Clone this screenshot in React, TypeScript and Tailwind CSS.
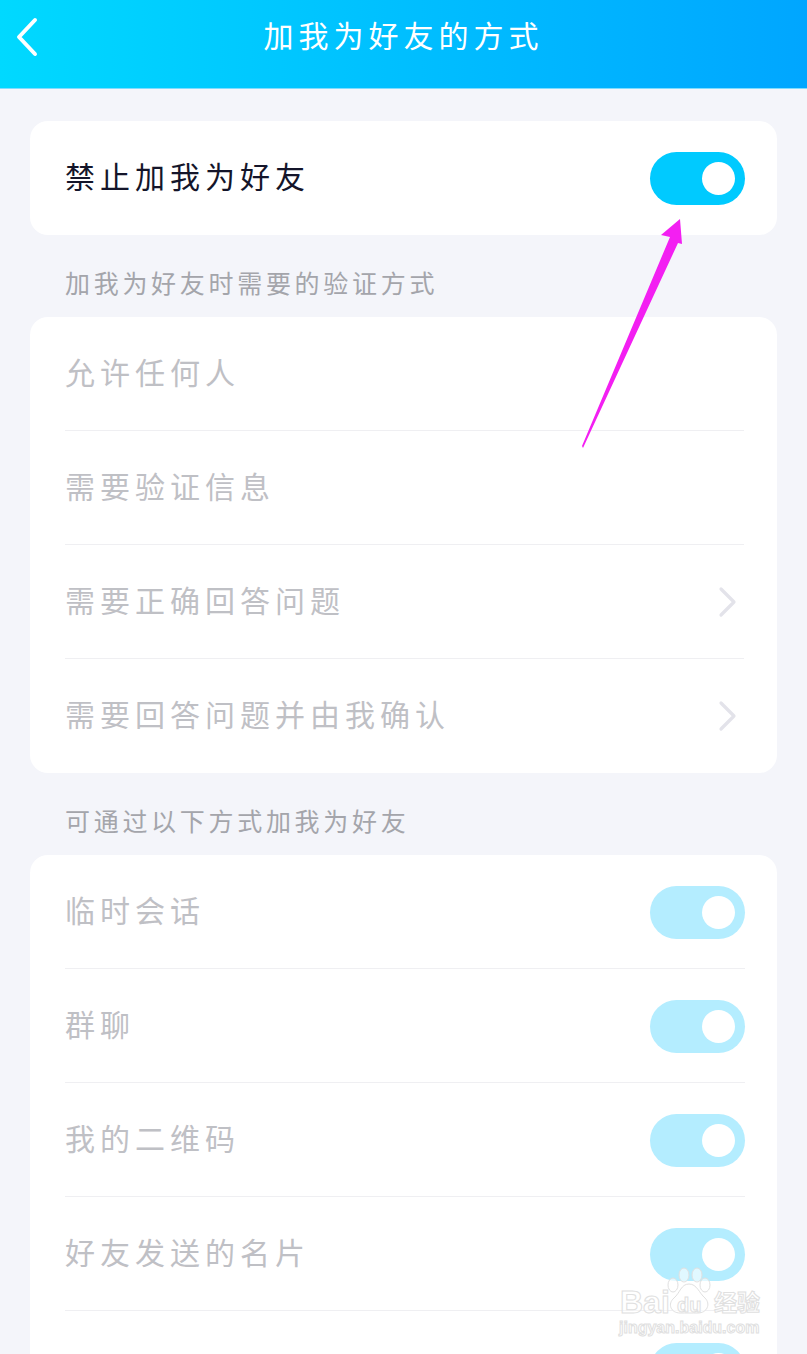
const fontCjk = 'font-["Noto_Sans_CJK_SC","Noto_Sans",sans-serif]'

function Toggle() {
  return (
    <div className="mt-[2px] flex h-[53px] w-[95px] flex-shrink-0 items-center justify-end rounded-full bg-[#b4edff] pr-[10px]">
      <div className="h-[33px] w-[33px] rounded-full bg-white" />
    </div>
  )
}

function Chevron() {
  return (
    <svg width="20" height="32" viewBox="0 0 20 32" fill="none" className="flex-shrink-0">
      <path d="M3 3 L16 16 L3 29" stroke="#e3e3ea" strokeWidth="3.2" strokeLinecap="round" strokeLinejoin="round" />
    </svg>
  )
}

function Row({ label, last, chevron, toggle }: { label: string; last?: boolean; chevron?: boolean; toggle?: boolean }) {
  return (
    <div className={`flex h-[114px] items-center justify-between ${last ? '' : 'border-b border-[#efeff2]'}`}>
      <span className={`text-[30px] leading-none tracking-[5px] text-[#bfc0c5] ${last && toggle ? '' : 'pb-[6px]'}`}>{label}</span>
      {chevron ? <div className="pr-[6px]"><Chevron /></div> : null}
      {toggle ? <Toggle /> : null}
    </div>
  )
}

function SectionLabel({ children }: { children: string }) {
  return (
    <div className="flex h-[82px] items-center px-[35px] pt-[13px] text-[25px] leading-none tracking-[3.7px] text-[#a4a5ab]">
      {children}
    </div>
  )
}

function Watermark() {
  const outline = 'text-white/40 [-webkit-text-stroke:1px_#e0e0e0]'

  return (
    <div className="absolute left-[618px] top-[1266px] h-[72px] w-[150px]">
      <svg width="50" height="54" viewBox="0 0 50 54" className="absolute left-[46px] top-0" fill="#ffffff" fillOpacity="0.6" stroke="#e0e0e0" strokeWidth="1">
        <ellipse cx="20" cy="9" rx="5" ry="7" />
        <ellipse cx="33" cy="9" rx="5" ry="7" />
        <ellipse cx="9" cy="19" rx="5" ry="7" />
        <ellipse cx="41" cy="19" rx="5" ry="7" />
        <path d="M25 18 C33 18 35 27 41 32 C47 38 43 47 34 47 C29 47 21 47 16 47 C7 47 3 38 10 32 C16 27 17 18 25 18 Z" />
      </svg>
      <span className={`absolute left-[2px] top-[18px] font-["Liberation_Sans",sans-serif] text-[32px] leading-[36px] font-bold ${outline}`}>Bai</span>
      <span className={`absolute left-[59px] top-[28px] font-["Liberation_Sans",sans-serif] text-[20px] leading-[22px] font-bold ${outline}`}>du</span>
      <span className={`absolute left-[96px] top-[21px] text-[23px] leading-[28px] font-bold ${outline}`}>经验</span>
      <span className={`absolute left-[1px] top-[52px] font-["Liberation_Sans",sans-serif] text-[16px] leading-[20px] font-bold ${outline}`}>jingyan.baidu.com</span>
    </div>
  )
}

function Arrow() {
  return (
    <svg className="absolute left-[570px] top-[210px]" width="125" height="245" viewBox="0 0 125 245">
      <polygon points="110,9 91,25 100,27 12,236 13,238 108,33 112,34" fill="#f31ff2" />
    </svg>
  )
}

export default function App() {
  return (
    <div className={`relative h-[1354px] w-[807px] overflow-hidden bg-[#f4f5fa] ${fontCjk}`}>
      <header className="relative flex h-[89px] items-center justify-center border-b border-[#7fdcff] bg-gradient-to-r from-[#00d9ff] via-[#00bfff] to-[#00a6ff] pb-[21px]">
        <svg width="26" height="40" viewBox="0 0 26 40" fill="none" className="absolute left-[14px] top-[17px]">
          <path d="M21 3 L5 20 L21 37" stroke="white" strokeWidth="4" strokeLinecap="round" strokeLinejoin="round" />
        </svg>
        <h1 className="text-[30px] leading-none tracking-[5px] font-normal text-white">加我为好友的方式</h1>
      </header>

      <div className="flex flex-col px-[30px] pt-[32px]">
        <section className="flex h-[114px] items-center justify-between rounded-[18px] bg-white pr-[32px] pl-[35px]">
          <span className="pb-[6px] text-[30px] leading-none tracking-[5px] text-[#14152a]">禁止加我为好友</span>
          <div className="flex h-[53px] w-[95px] items-center justify-end rounded-full bg-[#00caff] pr-[10px]">
            <div className="h-[33px] w-[33px] rounded-full bg-white" />
          </div>
        </section>

        <SectionLabel>加我为好友时需要的验证方式</SectionLabel>
        <section className="rounded-[18px] bg-white pr-[33px] pl-[35px]">
          <Row label="允许任何人" />
          <Row label="需要验证信息" />
          <Row label="需要正确回答问题" chevron />
          <Row label="需要回答问题并由我确认" chevron last />
        </section>

        <SectionLabel>可通过以下方式加我为好友</SectionLabel>
        <section className="rounded-[18px] bg-white pr-[32px] pl-[35px]">
          <Row label="临时会话" toggle />
          <Row label="群聊" toggle />
          <Row label="我的二维码" toggle />
          <Row label="好友发送的名片" toggle />
          <Row label="交友广场" toggle last />
        </section>
      </div>

      <Arrow />
      <Watermark />
    </div>
  )
}
